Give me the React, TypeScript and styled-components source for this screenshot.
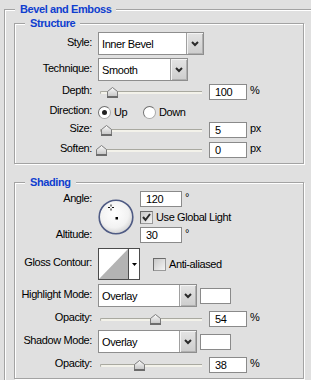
import React from 'react';
import styled, { createGlobalStyle } from 'styled-components';

const GlobalStyle = createGlobalStyle`
  html, body {
    margin: 0;
    padding: 0;
    overflow: hidden;
  }
  body {
    width: 311px;
    height: 380px;
    background: #e0e0e0;
    font-family: 'Liberation Sans', Arial, sans-serif;
    font-size: 11px;
    letter-spacing: -0.4px;
    color: #000;
  }
`;

const Outer = styled.fieldset`
  margin: 2px 0 0 4px;
  padding: 0 0 1px;
  width: 307px;
  box-sizing: border-box;
  min-width: 0;
  border: 1px solid #a3a3a3;
  border-right: none;
  border-bottom: none;
  box-shadow: inset 1px 1px 0 #fff;
`;

const Group = styled.fieldset<{ $mt?: number }>`
  margin: ${(p) => p.$mt ?? 0}px 0 0 9px;
  padding: 0;
  width: 290px;
  box-sizing: border-box;
  min-width: 0;
  border: 1px solid #a3a3a3;
  box-shadow: inset 1px 1px 0 #fff, 1px 1px 0 #fff;
`;

const Legend = styled.legend`
  margin-left: 10px;
  padding: 0 5px;
  line-height: 14px;
  font-weight: bold;
  color: #0f3ecf;
  background: #e0e0e0;
`;

const Body = styled.div`
  padding: 2px 0 5px;
`;

const Row = styled.div<{ $h: number; $mt?: number }>`
  display: flex;
  align-items: center;
  height: ${(p) => p.$h}px;
  margin-top: ${(p) => p.$mt ?? 0}px;
`;

const Label = styled.div`
  flex: none;
  width: 77px;
  margin-right: 6px;
  padding-bottom: 4px;
  text-align: right;
  white-space: nowrap;
`;

const Select = styled.div<{ $w: number }>`
  display: flex;
  width: ${(p) => p.$w}px;
  height: 23px;
  box-sizing: border-box;
  border: 1px solid #8e8e8e;
  background: #fff;
`;

const SelectValue = styled.div`
  flex: 1;
  display: flex;
  align-items: center;
  padding: 1px 0 0 3px;
  white-space: nowrap;
`;

const SelectButton = styled.div`
  display: flex;
  align-items: center;
  justify-content: center;
  width: 16px;
  border-left: 1px solid #a0a0a0;
  background: linear-gradient(#e4e4e4, #cdcdcd);
  box-shadow: inset 1px 1px 0 #f4f4f4, inset -1px -1px 0 #b0b0b0;
`;

const SliderTrack = styled.div`
  position: relative;
  flex: none;
  width: 104px;
  height: 16px;
  margin-right: 7px;
`;

const TrackLine = styled.div`
  position: absolute;
  left: 2px;
  right: 0;
  top: 7px;
  height: 2px;
  background: #f3f2ea;
  border-top: 1px solid #a9a9a0;
  border-left: 1px solid #a9a9a0;
  border-radius: 2px 0 0 2px;
`;

const ThumbSvg = styled.svg`
  position: absolute;
  top: 3px;
`;

const Field = styled.div<{ $w?: number }>`
  flex: none;
  width: ${(p) => p.$w ?? 38}px;
  height: 16px;
  box-sizing: border-box;
  border: 1px solid #8a8a8a;
  background: #fff;
  padding-left: 5px;
  line-height: 14px;
`;

const Unit = styled.span`
  margin-left: 3px;
  align-self: flex-start;
  line-height: 12px;
`;

const Option = styled.label<{ $w?: number }>`
  display: flex;
  align-items: center;
  gap: 3px;
  width: ${(p) => (p.$w ? `${p.$w}px` : 'auto')};
`;

const Radio = styled.span<{ $on?: boolean }>`
  display: flex;
  align-items: center;
  justify-content: center;
  width: 13px;
  height: 13px;
  box-sizing: border-box;
  border-radius: 50%;
  border: 1px solid #6e6e6e;
  border-right-color: #a8a8a8;
  border-bottom-color: #a8a8a8;
  background: #fff;
  &::after {
    content: '';
    width: 5px;
    height: 5px;
    border-radius: 50%;
    background: ${(p) => (p.$on ? '#222' : 'transparent')};
  }
`;

const Check = styled.span`
  display: flex;
  align-items: center;
  justify-content: center;
  flex: none;
  width: 13px;
  height: 13px;
  box-sizing: border-box;
  border: 1px solid #6a6a6a;
  border-right-color: #9a9a9a;
  border-bottom-color: #9a9a9a;
  background: linear-gradient(135deg, #c8c8c8, #f4f4f4);
`;

const CheckLine = styled.div<{ $ml?: number }>`
  display: flex;
  align-items: center;
  gap: 3px;
  margin-left: ${(p) => p.$ml ?? 0}px;
  white-space: nowrap;
`;

const AngleGrid = styled.div`
  display: grid;
  grid-template-columns: 77px 36px auto;
  grid-template-rows: 16px 20px 16px;
  column-gap: 6px;
  align-items: center;
`;

const GridLabel = styled(Label)<{ $row: number }>`
  grid-column: 1;
  grid-row: ${(p) => p.$row};
  margin-right: 0;
  padding-bottom: 2px;
`;

const Dial = styled.svg`
  grid-column: 2;
  grid-row: 1 / 4;
  align-self: start;
  margin-top: 8px;
`;

const Cell = styled.div<{ $row: number }>`
  grid-column: 3;
  grid-row: ${(p) => p.$row};
  display: flex;
  align-items: center;
`;

const Contour = styled.div`
  display: flex;
  width: 42px;
  height: 32px;
  box-sizing: border-box;
  border: 1px solid #4c4c4c;
  background: #fff;
`;

const ContourArrow = styled.div`
  display: flex;
  align-items: center;
  justify-content: center;
  flex: 1;
  border-left: 1px solid #4c4c4c;
`;

const Swatch = styled.div`
  width: 31px;
  height: 16px;
  box-sizing: border-box;
  margin-left: 3px;
  border: 1px solid #8a8a8a;
  background: #fff;
`;

const Chevron = () => (
  <svg width="8" height="6" viewBox="0 0 8 6">
    <polyline points="1,1 4,4 7,1" fill="none" stroke="#2a2a2a" strokeWidth="2" />
  </svg>
);

const Dropdown = ({ w, value }: { w: number; value: string }) => (
  <Select $w={w}>
    <SelectValue>{value}</SelectValue>
    <SelectButton>
      <Chevron />
    </SelectButton>
  </Select>
);

const Slider = ({ at }: { at: number }) => (
  <SliderTrack>
    <TrackLine />
    <ThumbSvg width="11" height="11" viewBox="0 0 11 11" style={{ left: 3 + at * 100 - 5.5 }}>
      <defs>
        <linearGradient id="thumbFill" x1="0" y1="0" x2="0" y2="1">
          <stop offset="0" stopColor="#fbfbfb" />
          <stop offset="1" stopColor="#c6c6c6" />
        </linearGradient>
      </defs>
      <path d="M0.5 9.5 V4.5 L5.5 0.5 L10.5 4.5 V9.5 Z" fill="url(#thumbFill)" stroke="#7c7c7c" />
      <rect x="0" y="9" width="11" height="2" fill="#6c6c6c" />
    </ThumbSvg>
  </SliderTrack>
);

type SliderRowProps = { label: string; value: string; unit: string; at: number; mt: number };

const SliderRow = ({ label, value, unit, at, mt }: SliderRowProps) => (
  <Row $h={16} $mt={mt}>
    <Label>{label}</Label>
    <Slider at={at} />
    <Field>{value}</Field>
    <Unit>{unit}</Unit>
  </Row>
);

const Tick = () => (
  <svg width="11" height="11" viewBox="0 0 11 11">
    <polyline points="2,5 4.5,8 9,2" fill="none" stroke="#2a2a2a" strokeWidth="2" />
  </svg>
);

export default function App() {
  return (
    <>
      <GlobalStyle />
      <Outer>
        <Legend>Bevel and Emboss</Legend>
        <Group>
          <Legend>Structure</Legend>
          <Body>
            <Row $h={23}>
              <Label>Style:</Label>
              <Dropdown w={106} value="Inner Bevel" />
            </Row>
            <Row $h={23} $mt={3}>
              <Label>Technique:</Label>
              <Dropdown w={90} value="Smooth" />
            </Row>
            <SliderRow mt={3} label="Depth:" value="100" unit="%" at={0.11} />
            <Row $h={18} $mt={3}>
              <Label>Direction:</Label>
              <Option $w={45}>
                <Radio $on />
                Up
              </Option>
              <Option>
                <Radio />
                Down
              </Option>
            </Row>
            <SliderRow mt={1} label="Size:" value="5" unit="px" at={0.055} />
            <SliderRow mt={4} label="Soften:" value="0" unit="px" at={0} />
          </Body>
        </Group>

        <Group $mt={11}>
          <Legend>Shading</Legend>
          <Body>
            <AngleGrid>
              <GridLabel $row={1}>Angle:</GridLabel>
              <GridLabel $row={3}>Altitude:</GridLabel>
              <Dial width="36" height="36" viewBox="0 0 36 36">
                <defs>
                  <radialGradient id="dialFill" cx="0.45" cy="0.4" r="0.6">
                    <stop offset="0" stopColor="#ffffff" />
                    <stop offset="0.7" stopColor="#f2f2f2" />
                    <stop offset="1" stopColor="#d4d4d4" />
                  </radialGradient>
                </defs>
                <circle cx="18" cy="18" r="16.8" fill="url(#dialFill)" stroke="#4f5b84" strokeWidth="1.6" />
                <path d="M10 8.5 H12 M14 8.5 H16 M13 5.5 V7.5 M13 9.5 V11.5" stroke="#111" strokeWidth="1" />
                <rect x="17.5" y="18" width="2.5" height="2.5" fill="#000" />
              </Dial>
              <Cell $row={1}>
                <Field $w={42}>120</Field>
                <Unit>°</Unit>
              </Cell>
              <Cell $row={2}>
                <CheckLine>
                  <Check>
                    <Tick />
                  </Check>
                  Use Global Light
                </CheckLine>
              </Cell>
              <Cell $row={3}>
                <Field $w={42}>30</Field>
                <Unit>°</Unit>
              </Cell>
            </AngleGrid>

            <Row $h={32} $mt={5}>
              <Label>Gloss Contour:</Label>
              <Contour>
                <svg width="29" height="30" viewBox="0 0 29 30">
                  <polygon points="0,30 29,0 29,30" fill="#b3b3b3" />
                </svg>
                <ContourArrow>
                  <svg width="5" height="3" viewBox="0 0 5 3">
                    <polygon points="0,0 5,0 2.5,3" fill="#000" />
                  </svg>
                </ContourArrow>
              </Contour>
              <CheckLine $ml={13}>
                <Check />
                Anti-aliased
              </CheckLine>
            </Row>

            <Row $h={23} $mt={4}>
              <Label>Highlight Mode:</Label>
              <Dropdown w={99} value="Overlay" />
              <Swatch />
            </Row>
            <SliderRow mt={4} label="Opacity:" value="54" unit="%" at={0.54} />
            <Row $h={23} $mt={3}>
              <Label>Shadow Mode:</Label>
              <Dropdown w={99} value="Overlay" />
              <Swatch />
            </Row>
            <SliderRow mt={4} label="Opacity:" value="38" unit="%" at={0.38} />
          </Body>
        </Group>
      </Outer>
    </>
  );
}
